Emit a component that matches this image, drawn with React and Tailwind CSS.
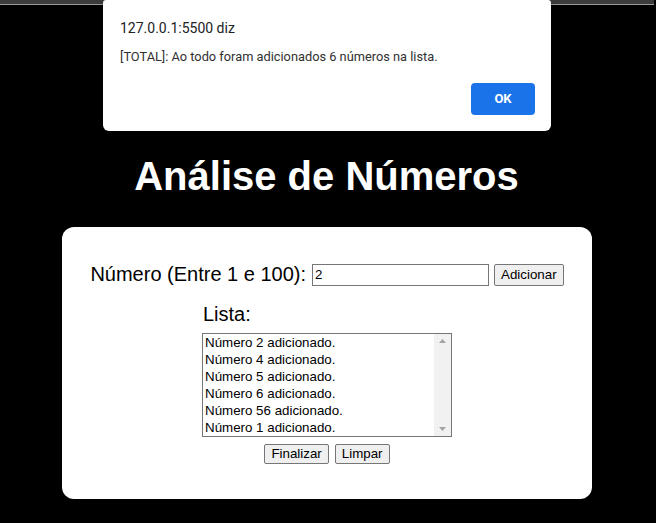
import { useState } from "react";

const itens = [2, 4, 5, 6, 56, 1];

function Lista() {
  return (
    <div className="flex h-[104px] w-[250px] border border-[#767676] bg-white">
      <div className="flex-1 pl-[2px] text-[13.33px] leading-[17px] text-black">
        {itens.map((n) => (
          <div key={n}>Número {n} adicionado.</div>
        ))}
      </div>
      <div className="flex w-[17px] flex-col items-center justify-between bg-[#f1f1f1] py-[5px]">
        <svg width="7" height="4" viewBox="0 0 7 4">
          <path d="M0 4 L3.5 0 L7 4 Z" fill="#a3a3a3" />
        </svg>
        <svg width="7" height="4" viewBox="0 0 7 4">
          <path d="M0 0 L3.5 4 L7 0 Z" fill="#a3a3a3" />
        </svg>
      </div>
    </div>
  );
}

export default function App() {
  const [num] = useState("2");

  return (
    <div className="relative min-h-[523px] bg-black pr-[2px] font-['Liberation_Sans',Arial,sans-serif]">
      <div className="h-[4px] bg-[#3c3c3c]"></div>
      <div className="h-[1px] bg-[#9a9a9a]"></div>

      <h1 className="mt-[148px] pr-[1px] text-center text-[40px] font-bold leading-[46px] text-white">
        Análise de Números
      </h1>

      <div className="mx-auto mt-[28px] flex w-[530px] flex-col items-center rounded-[12px] bg-white pb-[35px] pt-[36px]">
        <div className="flex items-center text-[20px] leading-[23px] text-black">
          <span>Número (Entre 1 e 100):</span>
          <div className="ml-[6px] flex h-[22px] w-[177px] items-center border border-[#767676] px-[2px] text-[13.33px]">
            {num}
          </div>
          <button className="ml-[5px] h-[22px] rounded-[2px] border border-[#767676] bg-[#efefef] px-[6px] text-[13.33px] leading-[18px]">
            Adicionar
          </button>
        </div>

        <div className="mt-[17px] flex w-[250px] flex-col">
          <span className="pl-[1px] text-[20px] leading-[23px] text-black">Lista:</span>
          <div className="mt-[7px]">
            <Lista />
          </div>
        </div>

        <div className="mt-[7px] flex gap-[6px]">
          <button className="h-[20px] rounded-[2px] border border-[#767676] bg-[#efefef] px-[6px] text-[13.33px] leading-[16px]">
            Finalizar
          </button>
          <button className="h-[20px] rounded-[2px] border border-[#767676] bg-[#efefef] px-[6px] text-[13.33px] leading-[16px]">
            Limpar
          </button>
        </div>
      </div>

      <div className="absolute left-[103px] top-0 h-[131px] w-[448px] rounded-b-[6px] rounded-t-[3px] bg-white font-['Roboto',sans-serif] shadow-[0_2px_6px_rgba(0,0,0,0.3)]">
        <div className="pl-[17px] pt-[18px] text-[14px] leading-[20px] text-[#202124]">
          127.0.0.1:5500 diz
        </div>
        <div className="pl-[17px] pt-[10px] text-[12.8px] leading-[18px] text-[#303030]">
          [TOTAL]: Ao todo foram adicionados 6 números na lista.
        </div>
        <div className="flex justify-end pr-[16px] pt-[17px]">
          <button className="h-[32px] w-[64px] rounded-[4px] bg-[#1a73e8] text-[13px] font-bold text-white">
            OK
          </button>
        </div>
      </div>
    </div>
  );
}
